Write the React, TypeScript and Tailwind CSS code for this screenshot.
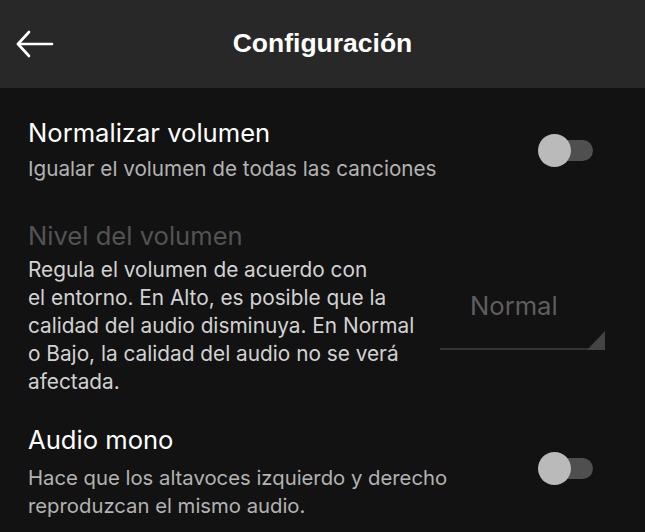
const Toggle = ({ className = "" }: { className?: string }) => (
  <div className={`relative w-[55px] h-[33px] shrink-0 ${className}`}>
    <div className="absolute left-[20px] top-[6px] w-[35px] h-[21px] rounded-full bg-[#4f4f4f]" />
    <div className="absolute left-0 top-0 w-[33px] h-[33px] rounded-full bg-[#bababa]" />
  </div>
);

export default function App() {
  return (
    <div className="w-[645px] h-[532px] bg-[#121212] overflow-hidden font-['Inter',sans-serif]">
      <header className="h-[88px] bg-[#282828] grid grid-cols-[1fr_auto_1fr] items-center">
        <div className="pl-[16px]">
          <svg width="38" height="28" viewBox="0 0 38 28" fill="none" stroke="white" strokeWidth="2.6" strokeLinecap="round" strokeLinejoin="round">
            <path d="M36 14H2" />
            <path d="M13 2 L2 14 L13 26" />
          </svg>
        </div>
        <h1 className="text-white text-[26.5px] font-bold font-['Liberation_Sans',sans-serif]">
          Configuración
        </h1>
        <div />
      </header>

      <div className="px-[28px] pt-[29px]">
        <div className="flex items-center justify-between pr-[24px]">
          <div>
            <div className="text-white text-[25.6px] leading-[32px]">Normalizar volumen</div>
            <div className="mt-[6px] text-[#b3b3b3] text-[20.7px] leading-[28px]">
              Igualar el volumen de todas las canciones
            </div>
          </div>
          <Toggle />
        </div>

        <div className="mt-[37px]">
          <div className="text-[#535353] text-[25.6px] leading-[32px]">Nivel del volumen</div>
          <div className="mt-[4px] flex items-start">
            <p className="w-[420px] text-[#d2d2d2] text-[20.8px] leading-[28px]">
              Regula el volumen de acuerdo con
              <br />
              el entorno. En Alto, es posible que la
              <br />
              calidad del audio disminuya. En Normal
              <br />o Bajo, la calidad del audio no se verá
              <br />
              afectada.
            </p>
            <div className="ml-[-8px] mt-[30px] w-[165px]">
              <div className="pl-[30px] text-[#5e5e5e] text-[25.6px] leading-[40px]">Normal</div>
              <div className="relative mt-[22px] h-[2px] bg-[#333]">
                <svg className="absolute right-0 bottom-0" width="18" height="19" viewBox="0 0 18 19">
                  <path d="M18 0 L18 19 L0 19 Z" fill="#444" />
                </svg>
              </div>
            </div>
          </div>
        </div>

        <div className="mt-[28px] flex items-center justify-between pr-[24px]">
          <div>
            <div className="text-white text-[25.6px] leading-[32px]">Audio mono</div>
            <div className="mt-[8px] text-[#b3b3b3] text-[20.3px] leading-[28px]">
              Hace que los altavoces izquierdo y derecho
              <br />
              reproduzcan el mismo audio.
            </div>
          </div>
          <Toggle className="mb-[8px]" />
        </div>
      </div>
    </div>
  );
}
